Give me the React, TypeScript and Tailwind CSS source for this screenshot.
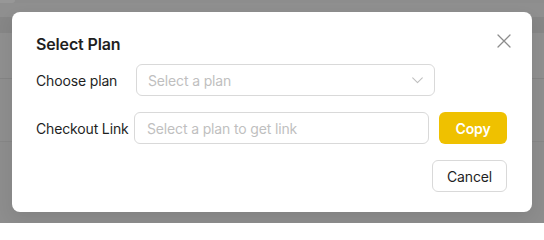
import React from "react";

function CloseIcon() {
  return (
    <svg width="14" height="14" viewBox="0 0 14 14" fill="none">
      <path d="M1 1L13 13M13 1L1 13" stroke="#8c8c8c" strokeWidth="1.3" strokeLinecap="round" />
    </svg>
  );
}

function Chevron() {
  return (
    <svg width="11" height="7" viewBox="0 0 11 7" fill="none">
      <path d="M0.7 0.8L5.5 5.6L10.3 0.8" stroke="#bfbfbf" strokeWidth="1.1" strokeLinecap="round" strokeLinejoin="round" />
    </svg>
  );
}

export default function App() {
  return (
    <div
      className="relative w-[544px] h-[223px] overflow-hidden bg-[#8d8d8d]"
      style={{ fontFamily: "Inter, 'Noto Sans', 'Liberation Sans', sans-serif" }}
    >
      {/* dimmed page behind overlay */}
      <div className="flex flex-col w-full h-full">
        <div className="h-[3px] w-[15px] rounded-br-[4px] bg-[#979797]" />
        <div className="h-[14px] bg-[#8f8f8f]" />
        <div className="h-[16px] bg-[#868686]" />
        <div className="h-[45px] bg-[#8f8f8f]" />
        <div className="h-px bg-[#848484]" />
        <div className="h-[62px] bg-[#8e8e8e]" />
        <div className="h-px bg-[#868686]" />
        <div className="flex-1 bg-[#8d8d8d]" />
      </div>

      {/* modal */}
      <div className="absolute left-[12px] top-[12px] w-[520px] rounded-[8px] bg-white px-[24px] pt-[20px] pb-[20px] shadow-[0_6px_16px_rgba(0,0,0,0.08)] tracking-[-0.15px]">
        <div className="flex items-start justify-between h-[24px]">
          <div className="text-[16px] leading-[24px] font-semibold text-[#1f1f1f]">Select Plan</div>
          <div className="mt-[2px] -mr-[3px]">
            <CloseIcon />
          </div>
        </div>

        <div className="mt-[8px] flex items-center h-[32px]">
          <div className="w-[100px] text-[14px] text-[#1f1f1f] whitespace-nowrap">Choose plan</div>
          <div className="flex items-center justify-between w-[299px] h-[32px] rounded-[6px] border border-[#d9d9d9] pl-[11px] pr-[11px]">
            <span className="text-[14px] text-[#bfbfbf]">Select a plan</span>
            <Chevron />
          </div>
        </div>

        <div className="mt-[16px] flex items-center h-[32px]">
          <div className="w-[98px] text-[14px] text-[#1f1f1f] whitespace-nowrap">Checkout Link</div>
          <div className="flex items-center w-[295px] h-[32px] rounded-[6px] border border-[#d9d9d9] pl-[12px]">
            <span className="text-[14px] text-[#bfbfbf]">Select a plan to get link</span>
          </div>
          <div className="ml-[10px] flex items-center justify-center w-[68px] h-[32px] rounded-[6px] bg-[#efc100] text-[14px] font-semibold text-white">
            Copy
          </div>
        </div>

        <div className="mt-[16px] flex justify-end">
          <div className="mr-px flex items-center justify-center w-[75px] h-[32px] rounded-[6px] border border-[#d9d9d9] bg-white text-[14px] text-[#1f1f1f]">
            Cancel
          </div>
        </div>
      </div>
    </div>
  );
}
